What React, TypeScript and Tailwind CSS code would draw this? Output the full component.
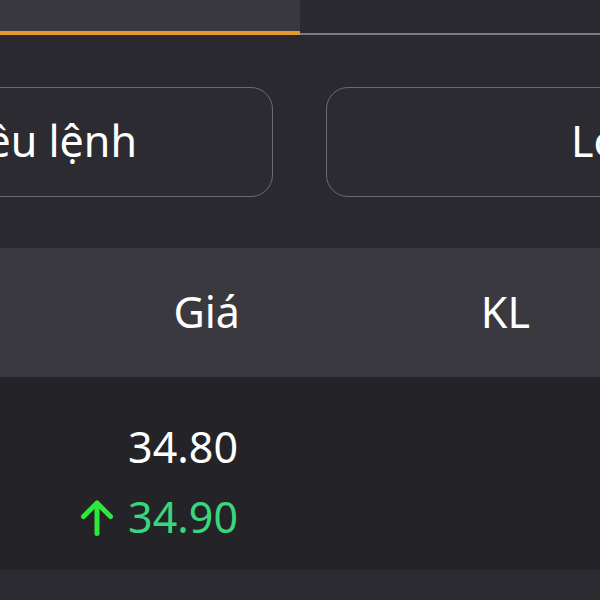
function UpArrow() {
  return (
    <svg
      width="34"
      height="36"
      viewBox="0 0 34 36"
      fill="none"
      stroke="#2fe83a"
      strokeWidth="5"
      strokeLinecap="round"
      strokeLinejoin="round"
      className="mr-[14px] mt-[2px]"
    >
      <path d="M17 33.5V3.5" />
      <path d="M3.5 16.5L17 3L30.5 16.5" />
    </svg>
  );
}

function OrderPanel() {
  return (
    <div className="w-[600px] h-[600px] overflow-hidden bg-[#2a2930] text-white font-['Noto_Sans',sans-serif]">
      {/* tabs */}
      <div className="flex h-[35px]">
        <div className="w-[300px] flex flex-col">
          <div className="flex-1 bg-[#39383e]" />
          <div className="h-[4px] bg-[#e59a2e]" />
        </div>
        <div className="flex-1 flex flex-col">
          <div className="flex-1 bg-[#2a2930]" />
          <div className="h-[2px] bg-[#7c7b82]" />
        </div>
      </div>

      {/* actions */}
      <div className="flex gap-[53px] pt-[52px] pb-[51px] overflow-hidden">
        <button className="shrink-0 ml-[-80px] w-[353px] h-[110px] rounded-[22px] border-[1.5px] border-[#6c6b72] bg-[#2c2b31] flex items-center justify-end pr-[135px]">
          <span className="whitespace-nowrap text-[43px] leading-none -mt-[4px]">
            Chọn nhiều lệnh
          </span>
        </button>
        <button className="shrink-0 w-[340px] h-[110px] rounded-[22px] border-[1.5px] border-[#6c6b72] bg-[#2c2b31] flex items-center pl-[244px]">
          <span className="whitespace-nowrap text-[43px] leading-none -mt-[4px]">
            Lọc lệnh
          </span>
        </button>
      </div>

      {/* table header */}
      <div className="flex items-center h-[129px] bg-[#3a393f] text-[43px]">
        <div className="w-[240px] text-right">Giá</div>
        <div className="w-[290px] text-right">KL</div>
      </div>

      {/* row */}
      <div className="h-[193px] bg-[#242328] flex">
        <div className="w-[240px] flex flex-col items-end pt-[35px] pr-[2px] text-[43px] leading-[70px]">
          <span>34.80</span>
          <span className="flex items-center text-[#3ad57c]">
            <UpArrow />
            34.90
          </span>
        </div>
        <div className="flex-1" />
      </div>

      <div className="h-[30px] bg-[#2b2a30]" />
    </div>
  );
}

export default function App() {
  return <OrderPanel />;
}
